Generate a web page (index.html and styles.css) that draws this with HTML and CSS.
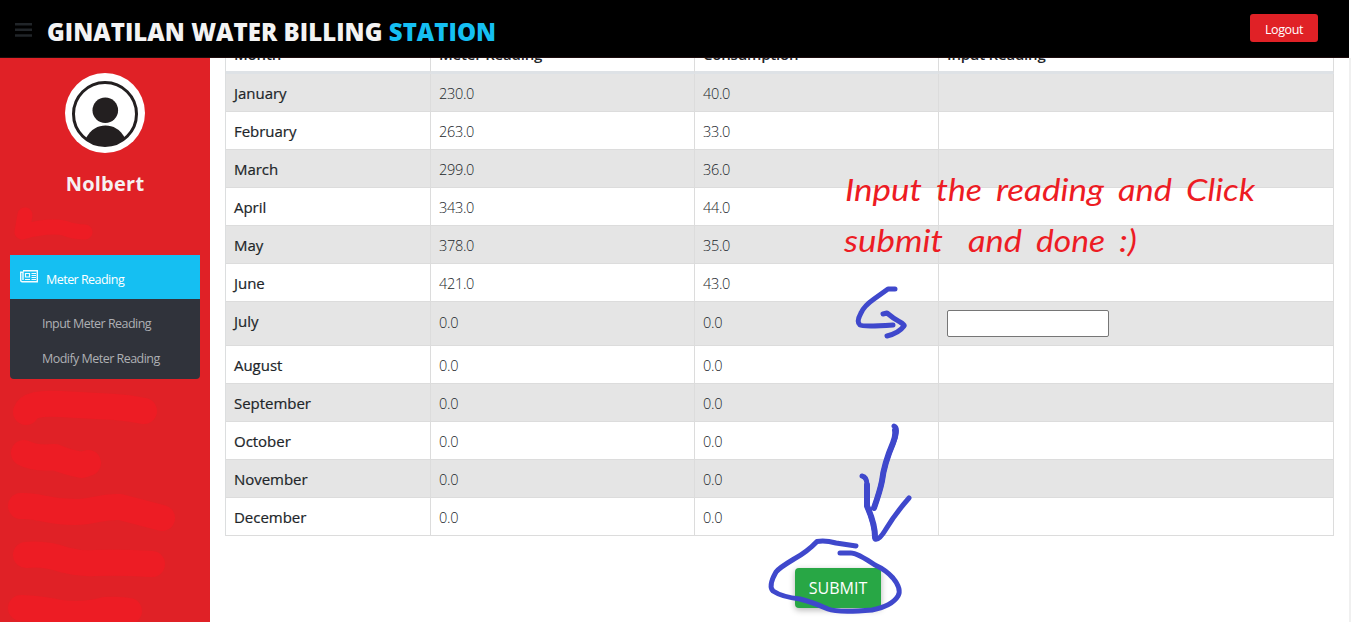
FILE: index.html
```
<!DOCTYPE html>
<html lang="en">
<head>
<meta charset="utf-8">
<title>Ginatilan Water Billing Station</title>
<link rel="stylesheet" href="styles.css">
</head>
<body>
<header class="topbar">
  <svg class="burger" width="17" height="14" viewBox="0 0 17 14"><path d="M0 0h17v2.500H0zM0 5.500h17V8H0zM0 11.200h17v2.500H0z" fill="#212529"/></svg>
  <h1 class="brand"><span class="brand-main">GINATILAN WATER BILLING</span> <span class="brand-accent">STATION</span></h1>
  <button class="logout">Logout</button>
</header>
<div class="page">
  <aside class="sidebar">
    <svg class="avatar" width="80" height="80" viewBox="0 0 80 80">
      <defs><clipPath id="ring"><circle cx="40" cy="41" r="32"/></clipPath></defs>
      <circle cx="40" cy="40" r="40" fill="#fff"/>
      <circle cx="40" cy="41" r="31.500" fill="none" stroke="#231f20" stroke-width="3"/>
      <circle cx="40.300" cy="37.200" r="12.800" fill="#231f20"/>
      <path clip-path="url(#ring)" d="M21 65C26 56 33 52.500 40.500 52.500S55 56 60 65V76H21z" fill="#231f20"/>
    </svg>
    <div class="user">Nolbert</div>
    <nav class="menu">
      <a class="menu-head">
        <svg width="18" height="13" viewBox="0 0 18 13"><path d="M3 .7h14.300v11.100H2.200Q.7 11.800.7 10V2.200H3V10" fill="none" stroke="#fff" stroke-opacity=".95" stroke-width="1.400"/><path d="M5.500 3.500h4v3.500h-4zM11.500 3.500H16M11.500 5.500H16M11.500 7.500H16M5 9.500h5M11.500 9.500H16" fill="none" stroke="#fff" stroke-opacity=".95" stroke-width="1.200"/></svg>
        <span>Meter Reading</span>
      </a>
      <div class="submenu">
        <a>Input Meter Reading</a>
        <a>Modify Meter Reading</a>
      </div>
    </nav>
  </aside>
  <main class="content">
    <table class="readings">
      <colgroup><col class="c1"><col class="c2"><col class="c3"><col class="c4"></colgroup>
      <thead><tr><th>Month</th><th>Meter Reading</th><th>Consumption</th><th>Input Reading</th></tr></thead>
      <tbody>
        <tr><th>January</th><td>230.0</td><td>40.0</td><td></td></tr>
        <tr><th>February</th><td>263.0</td><td>33.0</td><td></td></tr>
        <tr><th>March</th><td>299.0</td><td>36.0</td><td></td></tr>
        <tr><th>April</th><td>343.0</td><td>44.0</td><td></td></tr>
        <tr><th>May</th><td>378.0</td><td>35.0</td><td></td></tr>
        <tr><th>June</th><td>421.0</td><td>43.0</td><td></td></tr>
        <tr class="current"><th>July</th><td>0.0</td><td>0.0</td><td><input class="entry" type="text"></td></tr>
        <tr><th>August</th><td>0.0</td><td>0.0</td><td></td></tr>
        <tr><th>September</th><td>0.0</td><td>0.0</td><td></td></tr>
        <tr><th>October</th><td>0.0</td><td>0.0</td><td></td></tr>
        <tr><th>November</th><td>0.0</td><td>0.0</td><td></td></tr>
        <tr><th>December</th><td>0.0</td><td>0.0</td><td></td></tr>
      </tbody>
    </table>
    <button class="submit">SUBMIT</button>
  </main>
  <div class="gutter"></div>
</div>
<svg class="ink" width="1351" height="622" viewBox="0 0 1351 622">
  <g fill="none" stroke="#ed1c24" stroke-width="26" stroke-linecap="round" stroke-linejoin="round">
    <path stroke-width="15" d="M25 215L22 232Q48 225 64 228Q74 232 85 232"/>
    <path d="M26 412Q30 402 60 404L115 407Q130 408 144 411"/>
    <path d="M24 453Q35 459 55 457Q66 462 82 465L88 463"/>
    <path d="M21 506C40 505 45 512 75 512C95 512 100 506 120 507Q135 511 162 518"/>
    <path d="M26 555Q45 553 65 560Q80 564 95 563Q120 562 152 564"/>
    <path d="M21 608Q45 609 60 613Q85 616 105 610Q120 609 129 611"/>
  </g>
  <g fill="none" stroke="#3f48cc" stroke-width="5" stroke-linecap="round" stroke-linejoin="round">
    <path d="M895 289H888L874 299Q864 306 861 313Q856 322 860 325Q863 327 893 325M883 314L887 313Q894 319 900 322Q905 325 904 326Q899 333 887 336"/>
    <path d="M894 426Q899 428 894 441Q884 464 882 481Q880 491 874 508M862 476Q867 477 867 485V506Q875 524 875 539Q879 541 886 529Q895 514 909 498"/>
    <path stroke-width="6" d="M895 430Q896 436 893 443Q884 464 882 481Q880 491 874 508M867 485V506Q875 524 875 537"/>
    <path d="M856 546L836 543Q825 540 817 541.500Q807 552 794 559Q779 568 776 572Q768 586 773 591Q782 597 800 599Q812 602 828 609Q838 613 872 610Q892 606 898 596Q902 589 893 578Q886 570 875 565Q856 552 850 553Q845 553 840 553"/>
  </g>
  <g class="note">
    <text x="845" y="201" textLength="77" lengthAdjust="spacingAndGlyphs">Input</text>
    <text x="936" y="201" textLength="46" lengthAdjust="spacingAndGlyphs">the</text>
    <text x="996" y="201" textLength="108" lengthAdjust="spacingAndGlyphs">reading</text>
    <text x="1118" y="201" textLength="54" lengthAdjust="spacingAndGlyphs">and</text>
    <text x="1186" y="201" textLength="69" lengthAdjust="spacingAndGlyphs">Click</text>
    <text x="844" y="252" textLength="99" lengthAdjust="spacingAndGlyphs">submit</text>
    <text x="968" y="252" textLength="54" lengthAdjust="spacingAndGlyphs">and</text>
    <text x="1036" y="252" textLength="69" lengthAdjust="spacingAndGlyphs">done</text>
    <text x="1119" y="252" textLength="18" lengthAdjust="spacingAndGlyphs">:)</text>
  </g>
</svg>
</body>
</html>
```
FILE: styles.css
```
* { box-sizing: border-box; }
body { margin: 0; width: 1351px; height: 622px; overflow: hidden; position: relative; background: #fff; color: #212529; font-family: "Open Sans", "Noto Sans", sans-serif; font-size: 15px; }
button { font-family: inherit; border: 0; color: #fff; padding: 0; }
.topbar { width: 1349px; height: 58px; background: #000; border-bottom: 1px solid #1c0c0d; display: flex; align-items: flex-start; padding: 0 31px 0 15px; position: relative; z-index: 1; }
.burger { margin-top: 23px; }
.brand { margin: 16px 0 0 15px; font-size: 24px; letter-spacing: .04px; line-height: 32px; font-weight: 800; color: #f3f3f3; white-space: nowrap; }
.brand-accent { color: #15bff2; }
.logout { margin: 14px 0 0 auto; width: 68px; height: 28px; border-radius: 3px; background: #e02126; font-size: 12.500px; letter-spacing: -.4px; padding-top: 2px; }
.page { display: flex; height: 564px; }
.sidebar { width: 210px; background: #e02126; padding: 15px 10px; display: flex; flex-direction: column; align-items: center; }
.user { margin-top: 15px; height: 32px; line-height: 32px; font-size: 20px; letter-spacing: .25px; font-weight: 700; color: #f5f1f1; }
.menu { width: 190px; margin-top: 55px; border-radius: 0 0 4px 4px; overflow: hidden; font-size: 12.500px; letter-spacing: -.53px; }
.menu-head { height: 44px; display: flex; align-items: center; gap: 8px; padding: 3px 10px 0; background: #15bff2; color: #fff; }
.menu-head svg { margin-top: -4px; }
.menu-head span { padding-top: 1px; }
.submenu { height: 80px; padding: 7px 32px 0; background: #30333b; color: #aeb0b4; }
.submenu a { display: block; height: 35px; line-height: 35px; white-space: nowrap; }
.content { flex: 1; display: flex; flex-direction: column; overflow: hidden; padding-left: 15px; }
.readings { width: 1109px; margin-top: -25px; flex: none; table-layout: fixed; border-collapse: separate; border-spacing: 0; border-left: 1px solid #dcdedf; }
.c1 { width: 205px; } .c2 { width: 264px; } .c3 { width: 244px; } .c4 { width: 395px; }
.readings th, .readings td { height: 38px; padding: 0 8px; border: 0 solid #dcdcdc; border-width: 0 1px 1px 0; text-align: left; line-height: 22px; }
.readings th { font-weight: 500; -webkit-text-stroke: .2px #212529; letter-spacing: -.03px; }
.readings td { font-weight: 300; font-size: 14.500px; letter-spacing: -.3px; padding-top: 2px; }
.readings thead th { height: 41px; padding-top: 4px; border-bottom: 3px solid #dee2e6; font-weight: 600; letter-spacing: -.2px; -webkit-text-stroke: 0; }
.readings tbody tr:nth-child(odd) { background: #e5e5e5; }
.readings .current th { height: 44px; padding-bottom: 5px; }
.readings .current td { height: 44px; padding-bottom: 4px; }
.readings .current td:last-child { padding-top: 0; padding-bottom: 0; }
.entry { display: block; width: 162px; height: 27px; border: 1px solid #767676; border-radius: 2px; background: #fff; }
.submit { width: 86px; height: 40px; margin: 32px 0 0 570px; flex: none; border-radius: 4px; background: #28a745; font-size: 16px; box-shadow: 0 2px 6px rgba(0,0,0,.3); }
.gutter { width: 2px; background: #f0f0f0; margin-left: auto; }
.ink { position: absolute; left: 0; top: 0; z-index: 2; pointer-events: none; }
.note { font-family: Lato, sans-serif; font-style: italic; font-size: 30px; fill: #ed1c24; }
```
